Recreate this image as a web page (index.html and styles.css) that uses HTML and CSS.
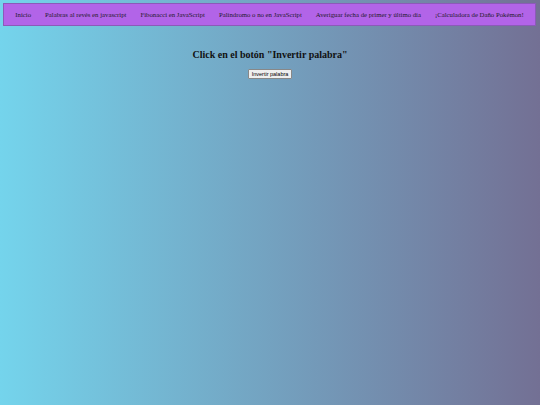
FILE: index.html
```html
<!DOCTYPE html>
<html lang="es">
<head>
<meta charset="utf-8">
<link rel="stylesheet" href="styles.css">
</head>
<body>
<nav class="nav">
  <a class="nav-link" href="#">Inicio</a>
  <a class="nav-link" href="#">Palabras al revés en javascript</a>
  <a class="nav-link" href="#">Fibonacci en JavaScript</a>
  <a class="nav-link" href="#">Palíndromo o no en JavaScript</a>
  <a class="nav-link" href="#">Averiguar fecha de primer y último día</a>
  <a class="nav-link" href="#">¡Calculadora de Daño Pokémon!</a>
</nav>
<main class="main">
  <h1 class="title">Click en el botón "Invertir palabra"</h1>
  <button class="btn">Invertir palabra</button>
</main>
</body>
</html>
```
FILE: styles.css
```css
html, body {
  margin: 0;
  padding: 0;
}
body {
  min-height: 405px;
  background: linear-gradient(to right, #74d4ec, #737094);
  font-family: "Liberation Serif", "DejaVu Serif", serif;
  padding-top: 3px;
  box-sizing: border-box;
}
.nav {
  margin: 0 4px 0 3px;
  height: 23px;
  box-sizing: border-box;
  background: #b264e8;
  border: 1px solid #8c5ab8;
  display: flex;
  justify-content: center;
  gap: 14px;
  align-items: center;
}
.nav-link {
  color: #1e1a2a;
  text-decoration: none;
  font-size: 6.75px;
}
.main {
  display: flex;
  flex-direction: column;
  align-items: center;
}
.title {
  margin: 23px 0 8px;
  font-size: 10px;
  line-height: 12px;
  font-weight: bold;
  color: #111;
}
.btn {
  font-family: "Liberation Sans", Arial, sans-serif;
  font-size: 5.5px;
  line-height: 6px;
  padding: 1px 3px;
  background: #efefef;
  border: 1px solid #888;
  border-radius: 1px;
  color: #000;
}
```
